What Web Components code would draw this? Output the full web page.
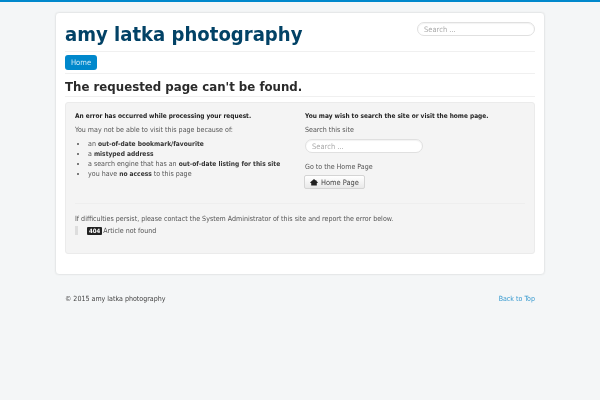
<!DOCTYPE html>
<html>
<head>
<meta charset="utf-8">
<title>amy latka photography</title>
<style>
    html, body { margin: 0; padding: 0; }
    body {
        min-height: 398px;
        background: #f4f6f7;
        border-top: 2px solid #0088cc;
        font-family: "DejaVu Sans", sans-serif;
        font-stretch: condensed;
        font-size: 7.06px;
        line-height: 9px;
        color: #444;
        /* reference is a soft downscale, no colour fringes on text */
        filter: blur(0.3px);
    }
</style>
</head>
<body>
<site-page>
    <site-header slot="header" sitename="amy latka photography"></site-header>
    <site-nav slot="nav"></site-nav>
    <error-panel slot="main"></error-panel>
</site-page>
<site-footer></site-footer>

<script>
const searchTemplate = document.createElement('template');
searchTemplate.innerHTML = `
    <style>
        :host { display: block; width: 118px; }
        input {
            display: block;
            box-sizing: border-box;
            width: 100%;
            height: 14px;
            margin: 0;
            padding: 0 6px;
            border: 1px solid #e0e0e0;
            border-radius: 7px;
            background: #fff;
            font: condensed 7.5px "DejaVu Sans", sans-serif;
            color: #555;
            box-shadow: inset 0 1px 1px rgba(0, 0, 0, 0.05);
        }
        input::placeholder { color: #aaa; opacity: 1; }
    </style>
    <input type="text" placeholder="Search ...">
`;

class SiteSearch extends HTMLElement {
    constructor() {
        super();
        this.attachShadow({ mode: 'open' });
        this.shadowRoot.appendChild(searchTemplate.content.cloneNode(true));
    }
}
customElements.define('site-search', SiteSearch);

const pageTemplate = document.createElement('template');
pageTemplate.innerHTML = `
    <style>
        :host {
            display: block;
            box-sizing: border-box;
            width: 490px;
            height: 263px;
            margin: 10px 0 0 55px;
            padding: 9px;
            background: #fff;
            border: 1px solid #e6e8e9;
            border-radius: 4px;
            box-shadow: 0 0 2px rgba(0, 0, 0, 0.05);
        }
    </style>
    <slot name="header"></slot>
    <slot name="nav"></slot>
    <slot name="main"></slot>
`;

class SitePage extends HTMLElement {
    constructor() {
        super();
        this.attachShadow({ mode: 'open' });
        this.shadowRoot.appendChild(pageTemplate.content.cloneNode(true));
    }
}
customElements.define('site-page', SitePage);

const headerTemplate = document.createElement('template');
headerTemplate.innerHTML = `
    <style>
        :host {
            display: flex;
            justify-content: space-between;
            align-items: flex-start;
            height: 29px;
            border-bottom: 1px solid #f0f0f0;
        }
        h1 {
            margin: 0;
            font-size: 20.08px;
            line-height: 24px;
            font-weight: bold;
            color: #024266;
        }
    </style>
    <h1 id="name"></h1>
    <site-search></site-search>
`;

class SiteHeader extends HTMLElement {
    constructor() {
        super();
        this.attachShadow({ mode: 'open' });
        this.shadowRoot.appendChild(headerTemplate.content.cloneNode(true));
    }

    connectedCallback() {
        this.shadowRoot.querySelector('#name').innerText = this.getAttribute('sitename');
    }
}
customElements.define('site-header', SiteHeader);

const navTemplate = document.createElement('template');
navTemplate.innerHTML = `
    <style>
        :host {
            display: flex;
            align-items: flex-start;
            height: 18px;
            padding: 3px 0 0;
            border-bottom: 1px solid #f0f0f0;
        }
        a {
            display: block;
            box-sizing: border-box;
            width: 32px;
            height: 15px;
            line-height: 15px;
            text-align: center;
            font-size: 7.6px;
            color: #d5ecf8;
            background: #0088cc;
            border-radius: 3px;
            text-decoration: none;
        }
    </style>
    <a href="#">Home</a>
`;

class SiteNav extends HTMLElement {
    constructor() {
        super();
        this.attachShadow({ mode: 'open' });
        this.shadowRoot.appendChild(navTemplate.content.cloneNode(true));
    }
}
customElements.define('site-nav', SiteNav);

const errorTemplate = document.createElement('template');
errorTemplate.innerHTML = `
    <style>
        :host { display: block; color: #555; }
        h2 {
            margin: 0;
            padding: 3px 0 0;
            height: 19px;
            font-size: 13.1px;
            line-height: 20px;
            font-weight: bold;
            color: #2a2a2a;
            border-bottom: 1px solid #f0f0f0;
        }
        .well {
            box-sizing: border-box;
            height: 152px;
            margin-top: 5px;
            padding: 9px;
            background: #f4f4f4;
            border: 1px solid #ebebeb;
            border-radius: 3px;
        }
        .cols { display: grid; grid-template-columns: 230px 1fr; height: 91px; }
        p { margin: 0; }
        .lead { font-weight: bold; font-size: 6.5px; color: #222; margin-bottom: 4px; }
        .line { margin-bottom: 5px; }
        ul { margin: 1px 0 0; padding: 0 0 0 13px; }
        li { line-height: 9px; }
        b { font-size: 6.6px; color: #333; }
        site-search { margin-bottom: 9px; }
        button {
            display: flex;
            align-items: center;
            gap: 3px;
            box-sizing: border-box;
            width: 61px;
            height: 14px;
            margin-left: -1px;
            margin-top: -1px;
            padding: 0 5px;
            font: condensed 7.4px "DejaVu Sans", sans-serif;
            color: #444;
            background: linear-gradient(#fff, #e9e9e9);
            border: 1px solid #d4d4d4;
            border-radius: 2px;
        }
        hr {
            margin: 0 0 10px;
            border: 0;
            border-top: 1px solid #eee;
        }
        .quote {
            display: flex;
            align-items: center;
            gap: 1px;
            height: 9px;
            margin-top: 3px;
            padding-left: 9px;
            border-left: 3px solid #ddd;
        }
        .badge {
            background: #222;
            color: #fff;
            font-weight: bold;
            font-size: 6px;
            line-height: 8px;
            padding: 0 2px;
            border-radius: 1px;
        }
    </style>
    <h2>The requested page can't be found.</h2>
    <div class="well">
        <div class="cols">
            <div>
                <p class="lead">An error has occurred while processing your request.</p>
                <p class="line">You may not be able to visit this page because of:</p>
                <ul>
                    <li>an <b>out-of-date bookmark/favourite</b></li>
                    <li>a <b>mistyped address</b></li>
                    <li>a search engine that has an <b>out-of-date listing for this site</b></li>
                    <li>you have <b>no access</b> to this page</li>
                </ul>
            </div>
            <div>
                <p class="lead">You may wish to search the site or visit the home page.</p>
                <p class="line">Search this site</p>
                <site-search></site-search>
                <p class="line">Go to the Home Page</p>
                <button>
                    <svg width="8" height="7" viewBox="0 0 8 7"><path fill="#222" d="M4 0 5.4 1.2H6.4V2L8 3.6 7.2 4H6.8V6.6H1.2V4H.8L0 3.6Z"/></svg>
                    Home Page
                </button>
            </div>
        </div>
        <hr>
        <p>If difficulties persist, please contact the System Administrator of this site and report the error below.</p>
        <div class="quote"><span class="badge">404</span> Article not found</div>
    </div>
`;

class ErrorPanel extends HTMLElement {
    constructor() {
        super();
        this.attachShadow({ mode: 'open' });
        this.shadowRoot.appendChild(errorTemplate.content.cloneNode(true));
    }
}
customElements.define('error-panel', ErrorPanel);

const footerTemplate = document.createElement('template');
footerTemplate.innerHTML = `
    <style>
        :host {
            display: flex;
            justify-content: space-between;
            width: 470px;
            margin: 19px 0 0 65px;
        }
        a { color: #3a9bd0; text-decoration: none; }
    </style>
    <span>© 2015 amy latka photography</span>
    <a href="#">Back to Top</a>
`;

class SiteFooter extends HTMLElement {
    constructor() {
        super();
        this.attachShadow({ mode: 'open' });
        this.shadowRoot.appendChild(footerTemplate.content.cloneNode(true));
    }
}
customElements.define('site-footer', SiteFooter);
</script>
</body>
</html>
